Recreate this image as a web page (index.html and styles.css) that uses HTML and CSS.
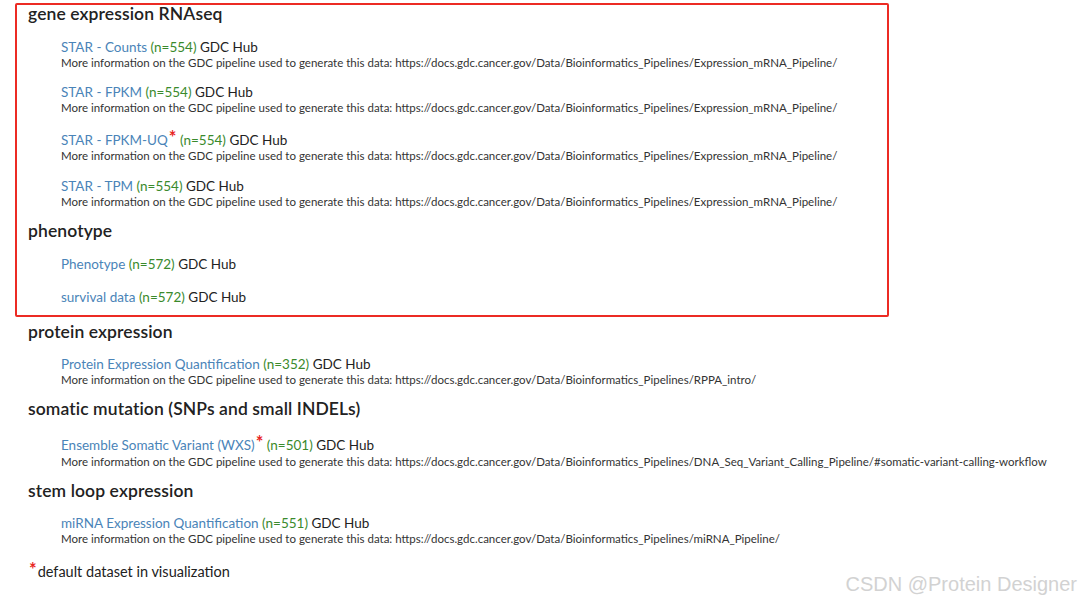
FILE: index.html
```html
<!DOCTYPE html>
<html lang="en">
<head>
    <meta charset="UTF-8">
    <title>GDC Hub datasets</title>
    <link rel="stylesheet" href="styles.css">
</head>
<body>
    <div class="page">
        <div class="highlight">
            <h2>gene expression RNAseq</h2>
            <div class="dataset">
                <div class="title"><a href="#">STAR - Counts</a> <span class="count">(n=554)</span> GDC Hub</div>
                <div class="note">More information on the GDC pipeline used to generate this data: https://docs.gdc.cancer.gov/Data/Bioinformatics_Pipelines/Expression_mRNA_Pipeline/</div>
            </div>
            <div class="dataset">
                <div class="title"><a href="#">STAR - FPKM</a> <span class="count">(n=554)</span> GDC Hub</div>
                <div class="note">More information on the GDC pipeline used to generate this data: https://docs.gdc.cancer.gov/Data/Bioinformatics_Pipelines/Expression_mRNA_Pipeline/</div>
            </div>
            <div class="dataset default">
                <div class="title"><a href="#">STAR - FPKM-UQ</a><sup class="star">*</sup> <span class="count">(n=554)</span> GDC Hub</div>
                <div class="note">More information on the GDC pipeline used to generate this data: https://docs.gdc.cancer.gov/Data/Bioinformatics_Pipelines/Expression_mRNA_Pipeline/</div>
            </div>
            <div class="dataset">
                <div class="title"><a href="#">STAR - TPM</a> <span class="count">(n=554)</span> GDC Hub</div>
                <div class="note">More information on the GDC pipeline used to generate this data: https://docs.gdc.cancer.gov/Data/Bioinformatics_Pipelines/Expression_mRNA_Pipeline/</div>
            </div>

            <h2>phenotype</h2>
            <div class="dataset plain">
                <div class="title"><a href="#">Phenotype</a> <span class="count">(n=572)</span> GDC Hub</div>
            </div>
            <div class="dataset plain">
                <div class="title"><a href="#">survival data</a> <span class="count">(n=572)</span> GDC Hub</div>
            </div>
        </div>

        <div class="section">
            <h2>protein expression</h2>
            <div class="dataset">
                <div class="title"><a href="#">Protein Expression Quantification</a> <span class="count">(n=352)</span> GDC Hub</div>
                <div class="note">More information on the GDC pipeline used to generate this data: https://docs.gdc.cancer.gov/Data/Bioinformatics_Pipelines/RPPA_intro/</div>
            </div>

            <h2>somatic mutation (SNPs and small INDELs)</h2>
            <div class="dataset default">
                <div class="title"><a href="#">Ensemble Somatic Variant (WXS)</a><sup class="star">*</sup> <span class="count">(n=501)</span> GDC Hub</div>
                <div class="note">More information on the GDC pipeline used to generate this data: https://docs.gdc.cancer.gov/Data/Bioinformatics_Pipelines/DNA_Seq_Variant_Calling_Pipeline/#somatic-variant-calling-workflow</div>
            </div>

            <h2>stem loop expression</h2>
            <div class="dataset">
                <div class="title"><a href="#">miRNA Expression Quantification</a> <span class="count">(n=551)</span> GDC Hub</div>
                <div class="note">More information on the GDC pipeline used to generate this data: https://docs.gdc.cancer.gov/Data/Bioinformatics_Pipelines/miRNA_Pipeline/</div>
            </div>

            <div class="legend"><sup class="star">*</sup>default dataset in visualization</div>
        </div>
    </div>
    <div class="watermark">CSDN @Protein Designer</div>
</body>
</html>
```

FILE: styles.css
```css
body {
    margin: 0;
    background-color: #fff;
    font-family: Lato, "Open Sans", sans-serif;
    color: #222;
}
.page {
    padding: 3px 0 0 15px;
}
.highlight {
    width: 859px;
    border: 2px solid #ec2b24;
    border-radius: 2px;
    padding: 0 0 9px 11px;
}
.highlight h2:first-child {
    margin-top: -2px;
}
.section {
    padding: 4px 0 0 13px;
}
.section h2:first-child {
    margin-top: 0;
}
h2 {
    margin: 11px 0 0 0;
    font-size: 17.5px;
    font-weight: 600;
    line-height: 22px;
    letter-spacing: 0.1px;
}
.dataset {
    margin: 13px 0 0 33px;
}
.section .dataset {
    margin-top: 12px;
}
.dataset.default,
.section .dataset.default {
    margin-top: 16px;
}
.dataset.default + .dataset {
    margin-top: 14px;
}
.dataset.plain + .dataset.plain {
    margin-top: 15px;
}
.title {
    font-size: 13.5px;
    line-height: 18px;
}
.title a {
    color: #4a84b8;
    text-decoration: none;
}
.count {
    color: #3a8a2c;
}
.note {
    font-size: 11.5px;
    line-height: 14px;
    color: #333;
}
.section .default .note {
    margin-top: 1px;
}
.star {
    color: #e8261e;
    font-size: 18px;
    font-weight: 700;
    line-height: 0;
    vertical-align: top;
    position: relative;
    top: 6px;
    margin-left: 1px;
}
.legend {
    margin-top: 17px;
    font-size: 14.5px;
    line-height: 18px;
}
.legend .star {
    margin-left: 1px;
    margin-right: 1px;
}
.watermark {
    position: absolute;
    right: 3px;
    bottom: 8px;
    font-family: "Liberation Sans", Arial, sans-serif;
    font-size: 20px;
    color: #d2d2d2;
}
```
